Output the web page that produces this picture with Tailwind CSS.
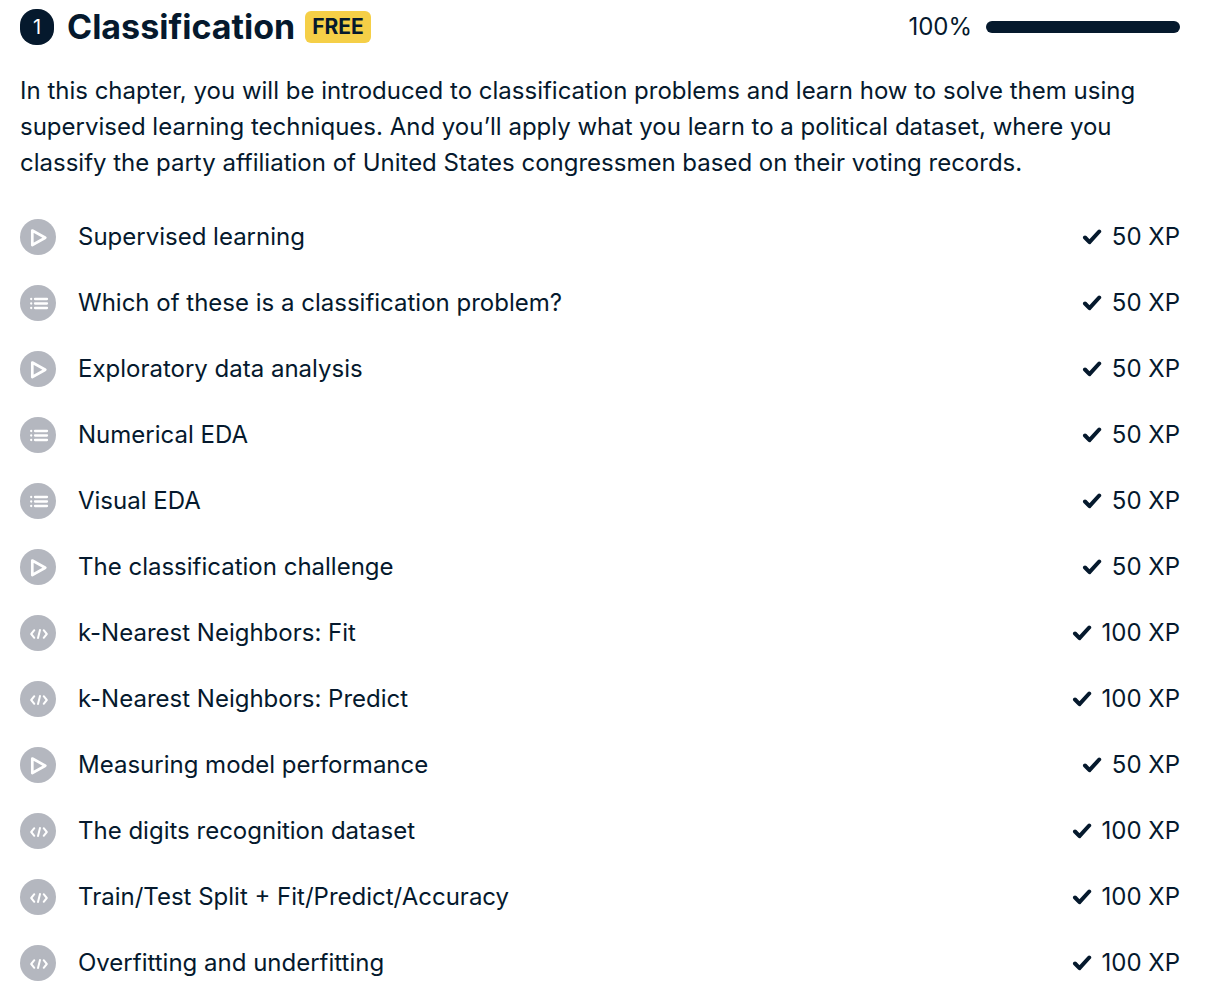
<!DOCTYPE html>
<html lang="en">
<head>
<meta charset="utf-8">
<meta name="viewport" content="width=device-width, initial-scale=1">
<title>Classification</title>
<script src="https://cdn.jsdelivr.net/npm/@tailwindcss/browser@4"></script>
</head>
<body class="bg-white font-['Inter',sans-serif] text-[#05192d]">
<svg class="hidden" aria-hidden="true">
  <symbol id="video" viewBox="0 0 36 36"><circle cx="18" cy="18" r="18" fill="#b4b7bf"/><path d="M12.300 11.500 25.300 18.700 12.300 26Z" fill="none" stroke="#fff" stroke-width="2.700" stroke-linejoin="round"/></symbol>
  <symbol id="list" viewBox="0 0 36 36"><circle cx="18" cy="18" r="18" fill="#b4b7bf"/><path d="M11.200 14h0M11.200 18.500h0M11.200 23h0M15 14h12M15 18.500h12M15 23h12" fill="none" stroke="#fff" stroke-width="2.300" stroke-linecap="round"/></symbol>
  <symbol id="code" viewBox="0 0 36 36"><circle cx="18" cy="18" r="18" fill="#b4b7bf"/><path d="M14.300 15.200 11.200 19l3.100 3.800M23.700 15.200 26.800 19l-3.100 3.800M20 15l-2 8" fill="none" stroke="#fff" stroke-width="2" stroke-linecap="round" stroke-linejoin="round"/></symbol>
  <symbol id="check" viewBox="0 0 20 18"><path d="M3 9.500 7.500 14.200 17.200 3.500" fill="none" stroke="#05192d" stroke-width="4" stroke-linecap="round" stroke-linejoin="round"/></symbol>
</svg>
<main class="pt-[7px] pr-[30px] pl-5">
  <header class="flex h-10 items-center justify-between">
    <div class="flex items-center">
      <span class="mr-[13px] flex h-9 w-[34px] items-center justify-center rounded-2xl bg-[#05192d] text-xl text-white">1</span>
      <h1 class="text-[34px] leading-10 font-bold">Classification</h1>
      <span class="ml-2.5 flex h-8 items-center rounded-md bg-[#f5cf47] px-[7px] text-[21px] font-bold">FREE</span>
    </div>
    <div class="flex items-center gap-3.5">
      <label for="progress" class="text-2xl">100%</label>
      <progress id="progress" value="100" max="100" class="h-3 w-[194px] appearance-none overflow-hidden rounded-full bg-[#e5e7eb] [&::-webkit-progress-bar]:bg-[#e5e7eb] [&::-webkit-progress-value]:bg-[#05192d]"></progress>
    </div>
  </header>
  <p class="mt-[26px] text-2xl leading-9">In this chapter, you will be introduced to classification problems and learn how to solve them using<br>supervised learning techniques. And you’ll apply what you learn to a political dataset, where you<br>classify the party affiliation of United States congressmen based on their voting records.</p>
  <ul class="mt-[38px] flex flex-col gap-[30px] text-2xl leading-9">
    <li><a href="#" class="flex items-center"><svg class="mr-[22px] size-9"><use href="#video"/></svg><span class="grow">Supervised learning</span><svg class="mr-2.5 h-[18px] w-5"><use href="#check"/></svg><span>50 XP</span></a></li>
    <li><a href="#" class="flex items-center"><svg class="mr-[22px] size-9"><use href="#list"/></svg><span class="grow">Which of these is a classification problem?</span><svg class="mr-2.5 h-[18px] w-5"><use href="#check"/></svg><span>50 XP</span></a></li>
    <li><a href="#" class="flex items-center"><svg class="mr-[22px] size-9"><use href="#video"/></svg><span class="grow">Exploratory data analysis</span><svg class="mr-2.5 h-[18px] w-5"><use href="#check"/></svg><span>50 XP</span></a></li>
    <li><a href="#" class="flex items-center"><svg class="mr-[22px] size-9"><use href="#list"/></svg><span class="grow">Numerical EDA</span><svg class="mr-2.5 h-[18px] w-5"><use href="#check"/></svg><span>50 XP</span></a></li>
    <li><a href="#" class="flex items-center"><svg class="mr-[22px] size-9"><use href="#list"/></svg><span class="grow">Visual EDA</span><svg class="mr-2.5 h-[18px] w-5"><use href="#check"/></svg><span>50 XP</span></a></li>
    <li><a href="#" class="flex items-center"><svg class="mr-[22px] size-9"><use href="#video"/></svg><span class="grow">The classification challenge</span><svg class="mr-2.5 h-[18px] w-5"><use href="#check"/></svg><span>50 XP</span></a></li>
    <li><a href="#" class="flex items-center"><svg class="mr-[22px] size-9"><use href="#code"/></svg><span class="grow">k-Nearest Neighbors: Fit</span><svg class="mr-2.5 h-[18px] w-5"><use href="#check"/></svg><span>100 XP</span></a></li>
    <li><a href="#" class="flex items-center"><svg class="mr-[22px] size-9"><use href="#code"/></svg><span class="grow">k-Nearest Neighbors: Predict</span><svg class="mr-2.5 h-[18px] w-5"><use href="#check"/></svg><span>100 XP</span></a></li>
    <li><a href="#" class="flex items-center"><svg class="mr-[22px] size-9"><use href="#video"/></svg><span class="grow">Measuring model performance</span><svg class="mr-2.5 h-[18px] w-5"><use href="#check"/></svg><span>50 XP</span></a></li>
    <li><a href="#" class="flex items-center"><svg class="mr-[22px] size-9"><use href="#code"/></svg><span class="grow">The digits recognition dataset</span><svg class="mr-2.5 h-[18px] w-5"><use href="#check"/></svg><span>100 XP</span></a></li>
    <li><a href="#" class="flex items-center"><svg class="mr-[22px] size-9"><use href="#code"/></svg><span class="grow">Train/Test Split + Fit/Predict/Accuracy</span><svg class="mr-2.5 h-[18px] w-5"><use href="#check"/></svg><span>100 XP</span></a></li>
    <li><a href="#" class="flex items-center"><svg class="mr-[22px] size-9"><use href="#code"/></svg><span class="grow">Overfitting and underfitting</span><svg class="mr-2.5 h-[18px] w-5"><use href="#check"/></svg><span>100 XP</span></a></li>
  </ul>
</main>
</body>
</html>
